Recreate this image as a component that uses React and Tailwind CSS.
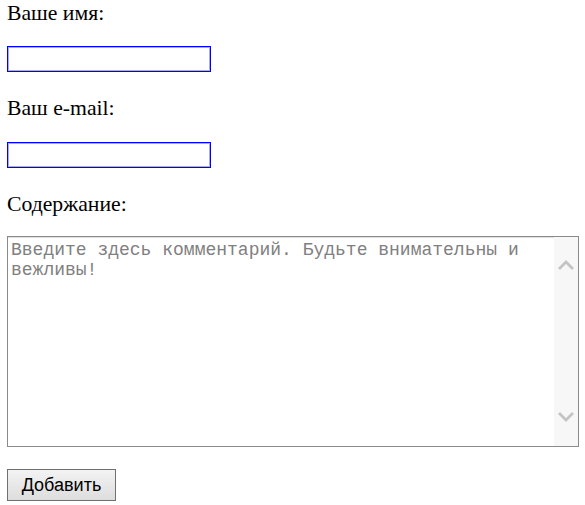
import React from "react";

function Chevron({ up }) {
  return (
    <svg width="16" height="10" viewBox="0 0 16 10" className="block">
      <path
        d={up ? "M2 8 L8 2 L14 8" : "M2 2 L8 8 L14 2"}
        fill="none"
        stroke="#c4c4c4"
        strokeWidth="2.8"
        strokeLinecap="square"
      />
    </svg>
  );
}

export default function App() {
  return (
    <div className="min-h-[505px] w-[585px] bg-white pl-[7px] text-black">
      <div className="pt-[2px] font-['Liberation_Serif',serif] text-[21.7px] leading-[23px]">Ваше имя:</div>
      <input
        type="text"
        className="mt-[21px] block h-[26px] w-[204px] border border-[#0000ff] shadow-[inset_0_0_0_1px_#a8a8f4] outline-none"
      />
      <div className="mt-[23px] pt-[2px] font-['Liberation_Serif',serif] text-[21.7px] leading-[23px]">Ваш e-mail:</div>
      <input
        type="text"
        className="mt-[22px] block h-[26px] w-[204px] border border-[#0000ff] shadow-[inset_0_0_0_1px_#a8a8f4] outline-none"
      />
      <div className="mt-[23px] pt-[2px] font-['Liberation_Serif',serif] text-[21.7px] leading-[23px]">Содержание:</div>
      <div className="mt-[20px] flex h-[211px] w-[572px] border border-[#8a8a8a]">
        <textarea
          className="h-full flex-1 resize-none border-t border-[#e0e0e0] px-[3px] pt-[2px] font-['Liberation_Mono',monospace] text-[18px] leading-[20px] text-black outline-none placeholder:text-[#808080]"
          placeholder="Введите здесь комментарий. Будьте внимательны и вежливы!"
        />
        <div className="flex w-[24px] flex-col items-center justify-between bg-[#f7f7f7] pb-[24px] pt-[23px]">
          <Chevron up />
          <Chevron />
        </div>
      </div>
      <button className="mt-[22px] block h-[32px] w-[109px] border border-[#707070] bg-gradient-to-b from-[#f3f3f3] to-[#dddddd] font-['Liberation_Sans',sans-serif] text-[18px] text-black">
        Добавить
      </button>
    </div>
  );
}
